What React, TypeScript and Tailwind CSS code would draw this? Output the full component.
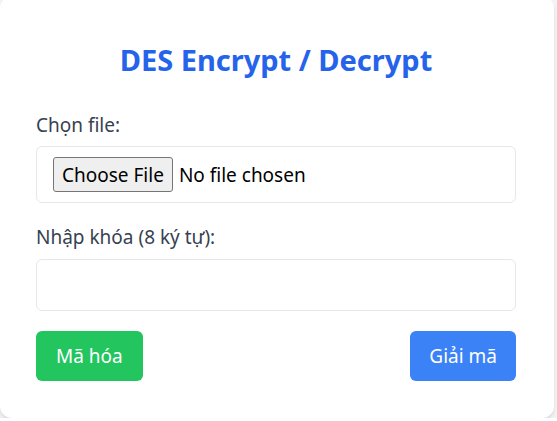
import { useState } from "react";

export default function App() {
  const [key, setKey] = useState("");

  return (
    <div
      className="min-h-screen bg-[#f3f4f6]"
      style={{ fontFamily: "'Segoe UI', 'Noto Sans', 'Open Sans', sans-serif" }}
    >
      <div className="mt-[-4px] w-[554px] rounded-xl bg-white pb-[37px] pl-9 pr-[38px] pt-[46px] shadow-md">
        {/* Title */}
        <h1 className="mb-[33px] text-center text-[29px] font-bold leading-[36px] text-[#2563eb]">
          DES Encrypt / Decrypt
        </h1>

        {/* File */}
        <label className="mb-[7px] block text-[19px] leading-7 text-[#374151]">Chọn file:</label>
        <input
          type="file"
          className="block w-full rounded-md border border-[#e5e7eb] px-4 py-2.5 text-[19px] leading-7 text-black file:mr-[6px] file:rounded-[3px] file:border file:border-[#767676] file:bg-[#efefef] file:px-[8px] file:py-[2.5px] file:text-black"
        />

        {/* Key */}
        <label className="mb-2 mt-5 block text-[19px] leading-7 text-[#374151]">Nhập khóa (8 ký tự):</label>
        <input
          type="text"
          value={key}
          onChange={e => setKey(e.target.value)}
          className="block w-full rounded-md border border-[#e5e7eb] px-4 py-[11px] text-lg leading-7 outline-none"
        />

        {/* Actions */}
        <div className="mt-5 flex items-center justify-between">
          <button className="rounded-md bg-[#22c55e] px-5 py-[11px] text-[19px] leading-7 text-white">Mã hóa</button>
          <button className="rounded-md bg-[#3b82f6] px-[19px] py-[11px] text-[19px] leading-7 text-white">Giải mã</button>
        </div>
      </div>
    </div>
  );
}
